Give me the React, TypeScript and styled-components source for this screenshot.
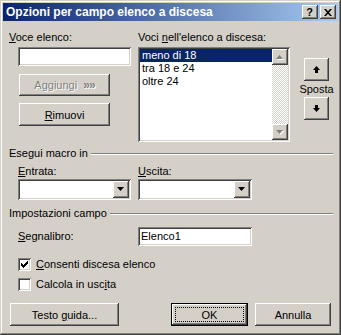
import React from 'react';
import styled, {createGlobalStyle} from 'styled-components';

const GlobalStyle = createGlobalStyle`
  html, body {
    margin: 0;
    padding: 0;
    background: #d4d0c8;
  }
  body {
    font-family: 'Liberation Sans', Arial, sans-serif;
    font-size: 11px;
    color: #000;
  }
  * {
    box-sizing: border-box;
  }
`;

const raised =
  'box-shadow: inset -1px -1px #404040, inset 1px 1px #fff, inset -2px -2px #808080, inset 2px 2px #d4d0c8;';
const sunken =
  'box-shadow: inset 1px 1px #808080, inset -1px -1px #fff, inset 2px 2px #404040, inset -2px -2px #d4d0c8;';

const listItems = ['meno di 18', 'tra 18 e 24', 'oltre 24'];

// pixel check mark, 7x7
const CHECK =
  'M6 0h1v1h-1z M5 1h2v1h-2z M0 2h1v1h-1z M4 2h3v1h-3z M0 3h2v1h-2z M3 3h3v1h-3z M0 4h5v1h-5z M1 5h3v1h-3z M2 6h1v1h-1z';

const Arrow = ({dir, disabled}: {dir: 'up' | 'down'; disabled?: boolean}) => {
  const pts = dir === 'up' ? '3.5,0 7,4 0,4' : '0,0 7,0 3.5,4';
  return (
    <svg width="8" height="5" viewBox="0 0 8 5">
      {disabled && (
        <polygon points={pts} fill="#fff" transform="translate(1,1)" />
      )}
      <polygon points={pts} fill={disabled ? '#808080' : '#000'} />
    </svg>
  );
};

const MoveArrow = ({dir}: {dir: 'up' | 'down'}) => (
  <svg width="7" height="7" viewBox="0 0 7 7">
    {dir === 'up' ? (
      <path d="M3.5 0 L7 4 H0 Z M2 4 H5 V7 H2 Z" fill="#000" />
    ) : (
      <path d="M2 0 H5 V3 H2 Z M0 3 H7 L3.5 7 Z" fill="#000" />
    )}
  </svg>
);

const App = () => {
  return (
    <>
      <GlobalStyle />
      <Window>
        <TitleBar>
          <Title>Opzioni per campo elenco a discesa</Title>
          <TitleButtons>
            <TitleButton>
              <HelpGlyph>?</HelpGlyph>
            </TitleButton>
            <TitleButton>
              <svg width="8" height="7" viewBox="0 0 8 7">
                <path
                  d="M0 0h2l2 2.2L6 0h2L5 3.5 8 7H6L4 4.8 2 7H0l3-3.5z"
                  fill="#000"
                />
              </svg>
            </TitleButton>
          </TitleButtons>
        </TitleBar>

        <Body>
          <TopRow>
            <LeftCol>
              <Label>
                <Key>V</Key>oce elenco:
              </Label>
              <TextBox $w={113} $indent={9} $top={3} />
              <Button $w={91} $h={22} $indent={10} $top={8}>
                <Disabled>
                  Aggiungi&nbsp;&nbsp;<Chevrons>»»</Chevrons>
                </Disabled>
              </Button>
              <Button $w={91} $h={23} $indent={10} $top={7}>
                <span>
                  <Key>R</Key>imuovi
                </span>
              </Button>
            </LeftCol>

            <ListCol>
              <Label>
                Voci <Key>n</Key>ell'elenco a discesa:
              </Label>
              <ListBox>
                <ListItems>
                  {listItems.map((item, i) => (
                    <Item key={item} $selected={i === 0}>
                      {item}
                    </Item>
                  ))}
                </ListItems>
                <ScrollBar>
                  <ScrollButton>
                    <Arrow dir="up" disabled />
                  </ScrollButton>
                  <ScrollTrack />
                  <ScrollButton>
                    <Arrow dir="down" disabled />
                  </ScrollButton>
                </ScrollBar>
              </ListBox>
            </ListCol>

            <MoveCol>
              <Button $w={25} $h={23} $top={27}>
                <MoveArrow dir="up" />
              </Button>
              <MoveLabel>Sposta</MoveLabel>
              <Button $w={25} $h={23}>
                <MoveArrow dir="down" />
              </Button>
            </MoveCol>
          </TopRow>

          <GroupHeader $top={5}>
            <span>Esegui macro in</span>
            <Etch />
          </GroupHeader>

          <MacroRow>
            <Field $w={113} $indent={9}>
              <Label>
                <Key>E</Key>ntrata:
              </Label>
              <Combo $w={113}>
                <DropButton>
                  <Arrow dir="down" />
                </DropButton>
              </Combo>
            </Field>
            <Field $w={114} $indent={7}>
              <Label>
                <Key>U</Key>scita:
              </Label>
              <Combo $w={114}>
                <DropButton>
                  <Arrow dir="down" />
                </DropButton>
              </Combo>
            </Field>
          </MacroRow>

          <GroupHeader $top={7}>
            <span>Impostazioni campo</span>
            <Etch />
          </GroupHeader>

          <BookmarkRow>
            <BookmarkLabel>
              <Key>S</Key>egnalibro:
            </BookmarkLabel>
            <TextBox $w={114}>
              <FieldText>Elenco1</FieldText>
            </TextBox>
          </BookmarkRow>

          <CheckRow $top={12}>
            <CheckBox>
              <svg width="7" height="7" viewBox="0 0 7 7">
                <path d={CHECK} fill="#000" />
              </svg>
            </CheckBox>
            <span>
              <Key>C</Key>onsenti discesa elenco
            </span>
          </CheckRow>
          <CheckRow $top={7}>
            <CheckBox />
            <span>
              Calcola in usc<Key>i</Key>ta
            </span>
          </CheckRow>

          <ButtonRow>
            <Button $w={109} $h={23} $indent={1}>
              <span>
                Testo <Key>g</Key>uida...
              </span>
            </Button>
            <DefaultButton>
              <FocusRect>OK</FocusRect>
            </DefaultButton>
            <Button $w={76} $h={23} $indent={7}>
              Annulla
            </Button>
          </ButtonRow>
        </Body>
      </Window>
    </>
  );
};

const Window = styled.div`
  width: 341px;
  height: 335px;
  padding: 3px;
  background: #d4d0c8;
  box-shadow: inset -1px -1px #404040, inset 1px 1px #d4d0c8,
    inset -2px -2px #808080, inset 2px 2px #fff;
  display: flex;
  flex-direction: column;
`;
const TitleBar = styled.div`
  height: 18px;
  padding: 0 2px 0 3px;
  background: linear-gradient(to right, #0a246a, #a6caf0);
  display: flex;
  align-items: center;
`;
const Title = styled.div`
  flex: 1;
  color: #fff;
  font-weight: bold;
  font-size: 12px;
  white-space: nowrap;
`;
const TitleButtons = styled.div`
  display: flex;
  gap: 2px;
`;
const TitleButton = styled.div`
  width: 16px;
  height: 14px;
  background: #d4d0c8;
  ${raised}
  display: flex;
  justify-content: center;
  align-items: center;
`;
const HelpGlyph = styled.span`
  font-weight: bold;
  font-size: 11px;
  line-height: 11px;
  margin-left: -1px;
`;
const Body = styled.div`
  flex: 1;
  padding: 0 5px 0 6px;
  display: flex;
  flex-direction: column;
`;
const TopRow = styled.div`
  margin-top: 10px;
  display: flex;
`;
const LeftCol = styled.div`
  width: 122px;
  display: flex;
  flex-direction: column;
`;
const ListCol = styled.div`
  width: 152px;
  margin-left: 7px;
  display: flex;
  flex-direction: column;
`;
const MoveCol = styled.div`
  width: 25px;
  margin-left: 14px;
  display: flex;
  flex-direction: column;
  align-items: center;
`;
const MoveLabel = styled.div`
  height: 16px;
  line-height: 16px;
  white-space: nowrap;
`;
const Label = styled.div`
  height: 13px;
  line-height: 13px;
  white-space: nowrap;
`;
const Key = styled.span`
  text-decoration: underline;
  text-underline-offset: 1px;
`;
const TextBox = styled.div<{$w: number; $indent?: number; $top?: number}>`
  width: ${p => p.$w}px;
  height: 19px;
  margin-left: ${p => p.$indent ?? 0}px;
  margin-top: ${p => p.$top ?? 0}px;
  background: #fff;
  ${sunken}
  padding: 0 3px;
  display: flex;
  align-items: center;
`;
const FieldText = styled.span`
  line-height: 13px;
`;
const Button = styled.div<{$w: number; $h: number; $indent?: number; $top?: number}>`
  width: ${p => p.$w}px;
  height: ${p => p.$h}px;
  margin-left: ${p => p.$indent ?? 0}px;
  margin-top: ${p => p.$top ?? 0}px;
  background: #d4d0c8;
  ${raised}
  display: flex;
  justify-content: center;
  align-items: center;
  white-space: nowrap;
`;
const Disabled = styled.span`
  color: #808080;
  text-shadow: 1px 1px #fff;
`;
const Chevrons = styled.span`
  font-weight: bold;
  font-size: 12px;
  letter-spacing: -1px;
`;
const DefaultButton = styled.div`
  width: 77px;
  height: 23px;
  margin-left: 52px;
  border: 1px solid #000;
  background: #d4d0c8;
  ${raised}
  padding: 3px;
  display: flex;
`;
const FocusRect = styled.div`
  flex: 1;
  border: 1px dotted #000;
  display: flex;
  justify-content: center;
  align-items: center;
`;
const ListBox = styled.div`
  margin-top: 3px;
  height: 95px;
  padding: 2px;
  background: #fff;
  ${sunken}
  display: flex;
`;
const ListItems = styled.div`
  flex: 1;
  display: flex;
  flex-direction: column;
`;
const Item = styled.div<{$selected: boolean}>`
  height: 13px;
  line-height: 13px;
  padding-left: 2px;
  background: ${p => (p.$selected ? '#0a246a' : 'transparent')};
  color: ${p => (p.$selected ? '#fff' : '#000')};
`;
const ScrollBar = styled.div`
  width: 16px;
  display: flex;
  flex-direction: column;
`;
const ScrollButton = styled.div`
  width: 16px;
  height: 16px;
  background: #d4d0c8;
  ${raised}
  display: flex;
  justify-content: center;
  align-items: center;
`;
const ScrollTrack = styled.div`
  flex: 1;
  background-color: #d4d0c8;
  background-image: conic-gradient(
    #fff 25%,
    #d4d0c8 0 50%,
    #fff 0 75%,
    #d4d0c8 0
  );
  background-size: 2px 2px;
`;
const GroupHeader = styled.div<{$top: number}>`
  margin-top: ${p => p.$top}px;
  height: 13px;
  line-height: 13px;
  display: flex;
  align-items: center;
  gap: 3px;
  white-space: nowrap;
`;
const Etch = styled.div`
  flex: 1;
  height: 2px;
  border-top: 1px solid #808080;
  border-bottom: 1px solid #fff;
`;
const MacroRow = styled.div`
  margin-top: 5px;
  display: flex;
`;
const Field = styled.div<{$w: number; $indent: number}>`
  width: ${p => p.$w}px;
  margin-left: ${p => p.$indent}px;
  display: flex;
  flex-direction: column;
  gap: 1px;
`;
const Combo = styled.div<{$w: number}>`
  width: ${p => p.$w}px;
  height: 21px;
  padding: 2px;
  background: #fff;
  ${sunken}
  display: flex;
  justify-content: flex-end;
`;
const DropButton = styled.div`
  width: 16px;
  height: 17px;
  background: #d4d0c8;
  ${raised}
  display: flex;
  justify-content: center;
  align-items: center;
`;
const BookmarkRow = styled.div`
  margin-top: 7px;
  display: flex;
  align-items: center;
`;
const BookmarkLabel = styled.div`
  width: 120px;
  margin-left: 9px;
  line-height: 13px;
`;
const CheckRow = styled.div<{$top: number}>`
  margin-top: ${p => p.$top}px;
  margin-left: 9px;
  height: 13px;
  display: flex;
  align-items: center;
  gap: 5px;
  line-height: 13px;
  white-space: nowrap;
`;
const CheckBox = styled.div`
  width: 13px;
  height: 13px;
  background: #fff;
  ${sunken}
  display: flex;
  justify-content: center;
  align-items: center;
`;
const ButtonRow = styled.div`
  margin-top: 12px;
  display: flex;
`;

export default App;
